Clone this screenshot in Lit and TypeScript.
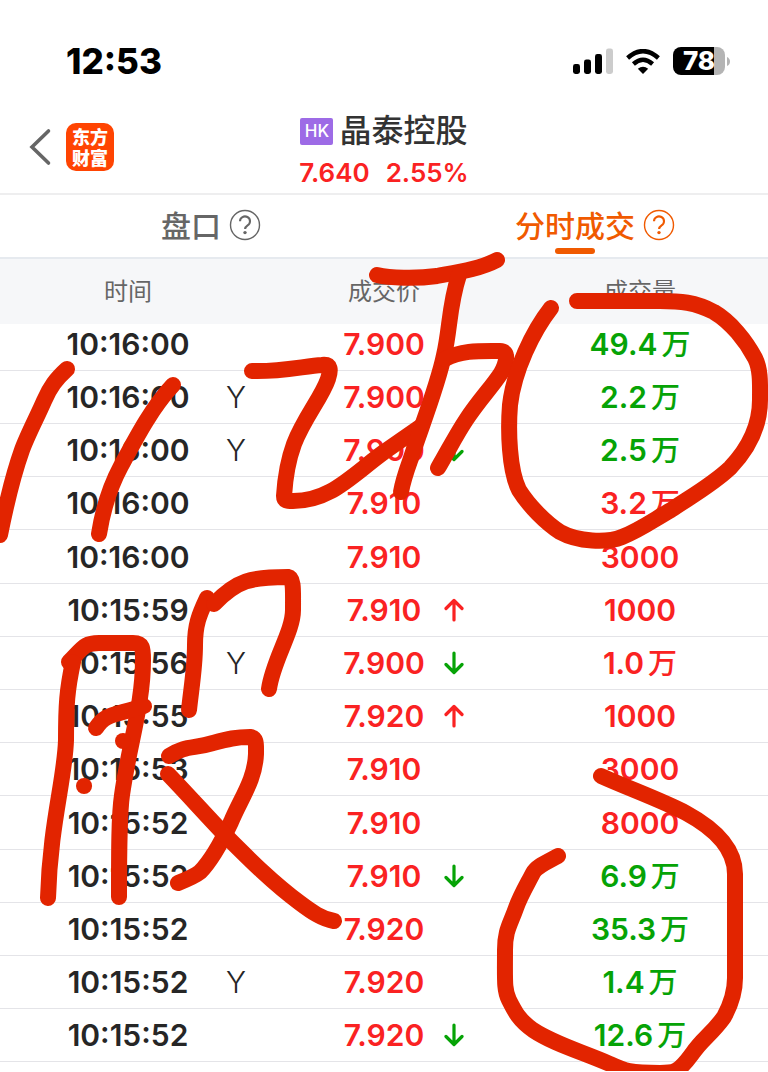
import { LitElement, html, css, svg, nothing } from "lit";
import { customElement } from "lit/decorators.js";
import { classMap } from "lit/directives/class-map.js";

type Tone = "up" | "down";
interface Trade {
  time: string;
  auction?: boolean;
  price: string;
  move?: Tone;
  volume: string;
  unit?: string;
  tone: Tone;
}

const TRADES: Trade[] = [
  { time: "10:16:00", price: "7.900", volume: "49.4", unit: "万", tone: "down" },
  { time: "10:16:00", auction: true, price: "7.900", volume: "2.2", unit: "万", tone: "down" },
  { time: "10:16:00", auction: true, price: "7.900", move: "down", volume: "2.5", unit: "万", tone: "down" },
  { time: "10:16:00", price: "7.910", volume: "3.2", unit: "万", tone: "up" },
  { time: "10:16:00", price: "7.910", volume: "3000", tone: "up" },
  { time: "10:15:59", price: "7.910", move: "up", volume: "1000", tone: "up" },
  { time: "10:15:56", auction: true, price: "7.900", move: "down", volume: "1.0", unit: "万", tone: "up" },
  { time: "10:15:55", price: "7.920", move: "up", volume: "1000", tone: "up" },
  { time: "10:15:53", price: "7.910", volume: "3000", tone: "up" },
  { time: "10:15:52", price: "7.910", volume: "8000", tone: "up" },
  { time: "10:15:52", price: "7.910", move: "down", volume: "6.9", unit: "万", tone: "down" },
  { time: "10:15:52", price: "7.920", volume: "35.3", unit: "万", tone: "down" },
  { time: "10:15:52", auction: true, price: "7.920", volume: "1.4", unit: "万", tone: "down" },
  { time: "10:15:52", price: "7.920", move: "down", volume: "12.6", unit: "万", tone: "down" },
];

/* Freehand marker strokes drawn over the list */
const STROKES = [
  "M67 369 C56 379 50 387 44 401 S27 436 22 450 S8 495 0 535",
  "M173 385 C152 407 135 440 121 466 S102 515 99 534",
  "M252 371 C280 372 305 366 322 365 C331 364 331 370 328 379 C322 397 304 418 294 444 C287 463 285 480 284 496 C284 501 287 501 293 501 C330 501 350 477 384 452 L420 427",
  "M377 275 C390 278 415 279 437 276 C459 272 480 269 497 260",
  "M459 275 C449 305 450 330 444 355 C438 385 420 430 411 458 C406 472 403 480 401 492",
  "M445 359 C462 350 480 351 500 351 C509 351 507 362 501 373 C492 387 479 400 466 420 C456 435 448 451 438 468",
  "M551 308 C533 331 514 370 510 405 C508 430 509 470 519 490 C529 506 546 523 560 532 C578 542 607 543 622 537 C640 530 655 519 671 510 C690 497 712 485 730 468 C750 447 760 425 760 400 C760 385 761 370 755 358 C746 341 731 322 714 312 C695 302 680 301 660 301 L577 301",
  "M207 598 C199 615 195 625 195 645 C195 668 191 690 189 710",
  "M214 604 C237 580 251 577 288 577 C294 578 293 590 293 610 C293 632 273 660 269 689",
  "M69 662 C83 648 84 643 99 643 L133 643 C143 643 143 648 143 660 C143 705 129 745 122 795 C119 815 119 850 119 897",
  "M73 662 C67 690 66 705 66 740 C65 778 50 825 48 898",
  "M96 728 C106 713 113 716 144 706",
  "M123 741 h0.1",
  "M84 786 h0.1",
  "M169 756 C186 745 193 749 213 743 C228 739 236 737 250 737 C257 738 256 744 256 754 C255 780 241 798 231 822 C222 841 211 861 200 872 C195 876 188 879 178 883",
  "M168 774 C190 797 206 815 227 837 C250 860 273 883 300 903 C312 912 322 919 334 921",
  "M601 776 C630 789 661 800 686 813 C710 826 735 845 735 874 L735 978 C735 992 730 1006 724 1017 C711 1035 703 1038 692 1054 C678 1073 674 1073 660 1073 C630 1073 625 1071 610 1064 C580 1051 554 1044 533 1030 C519 1020 515 1012 509 1000 C504 990 505 980 505 950 C505 930 510 925 516 908 C521 894 528 883 533 873 C536 867 543 864 558 856",
];

const help = svg`<circle cx="16" cy="16" r="14.5" fill="none" stroke="currentColor" stroke-width="1.4"/>
  <path d="M11 12.2 a5 4.8 0 1 1 7.6 4.1 c-1.8 1.2 -2.5 1.8 -2.5 3.7" fill="none" stroke="currentColor" stroke-width="2.1"/>
  <circle cx="16" cy="23.6" r="1.7" fill="currentColor"/>`;

@customElement("app-root")
export class AppRoot extends LitElement {
  static styles = css`
    :host {
      display: block;
      position: relative;
      overflow: hidden;
      min-height: 100vh;
      background: #fff;
      color: #262626;
      font-family: Inter, "Noto Sans CJK SC", sans-serif;
    }
    .status {
      display: flex;
      align-items: center;
      justify-content: space-between;
      height: 44px;
      padding: 39px 38px 17px 66px;
      color: #000;
    }
    .clock { font-size: 35px; line-height: 44px; font-weight: 800; }
    .indicators { display: flex; align-items: center; gap: 13px; }
    .indicators svg { display: block; }
    .battery { display: flex; align-items: center; gap: 2px; }
    .cell {
      width: 52px;
      height: 28px;
      border-radius: 8px;
      background: linear-gradient(90deg, #000 78%, #b4b4b4 78%);
      color: #fff;
      font-size: 26px;
      line-height: 28px;
      font-weight: 800;
      text-align: center;
    }
    .header {
      display: grid;
      grid-template-columns: 1fr auto 1fr;
      height: 93px;
      padding: 0 28px;
      border-bottom: 2px solid #eeeeef;
    }
    .nav { display: flex; align-items: center; gap: 14px; }
    button {
      border: 0;
      padding: 0;
      background: none;
      color: inherit;
      font: inherit;
      cursor: pointer;
    }
    .back svg, .move { display: block; }
    .logo {
      width: 48px;
      height: 48px;
      box-sizing: border-box;
      padding-top: 3px;
      border-radius: 10px;
      background: #ff4402;
      color: #fff;
      font: 900 18px/21px "Noto Sans CJK SC", sans-serif;
      text-align: center;
    }
    .stock { display: flex; flex-direction: column; align-items: center; padding-top: 10px; }
    .name { display: flex; align-items: center; gap: 6px; margin: 0; font-size: 32px; line-height: 42px; font-weight: 500; color: #333; }
    .market { width: 33px; border-radius: 2px; background: #9d6be6; color: #fff; font-size: 17px; line-height: 27px; text-align: center; }
    .quote { display: flex; gap: 16px; font-size: 26px; line-height: 42px; font-weight: 600; color: #fa2222; }
    .tabs { display: grid; grid-template-columns: 1fr 1fr; height: 62px; border-bottom: 2px solid #e6eaef; }
    .tab { display: flex; align-items: center; justify-content: center; gap: 8px; padding: 0 0 2px 38px; color: #666; font-size: 30px; line-height: 40px; font-weight: 500; }
    .tab.active { color: #f05a00; }
    .label { position: relative; padding-top: 2px; }
    .active .label::after {
      content: "";
      position: absolute;
      left: 40px;
      right: 40px;
      bottom: -8px;
      height: 6px;
      border-radius: 3px;
      background: #f05a00;
    }
    table { width: 100%; table-layout: fixed; border-collapse: separate; border-spacing: 0; }
    th { height: 65px; padding: 0; background: #f6f7f9; color: #666; font-size: 24px; line-height: 32px; font-weight: 400; }
    td { box-sizing: border-box; height: 53px; padding: 0; border-bottom: 1px solid #e4e4e8; font-size: 30px; line-height: 40px; font-weight: 600; text-align: center; }
    tr:nth-child(5n) td { height: 54px; }
    tr:first-child td { height: 47px; padding-bottom: 6px; }
    .slot { display: grid; grid-template-columns: 1fr auto 1fr; align-items: center; }
    .main { grid-column: 2; }
    .flag { justify-self: end; padding-right: 10px; font-weight: 300; }
    .move { justify-self: end; margin-right: 48px; }
    .unit { padding-left: 4px; font-size: 29px; line-height: 32px; font-weight: 500; }
    .up { color: #fa2222; }
    .down { color: #06a306; }
    .ink { position: absolute; top: 0; left: 0; width: 100%; pointer-events: none; }
  `;

  private row(t: Trade) {
    return html`<tr>
      <td>
        <div class="slot"><span class="main">${t.time}</span>${t.auction ? html`<span class="flag">Y</span>` : nothing}</div>
      </td>
      <td>
        <div class="slot">
          <span class="main up">${t.price}</span>${t.move
            ? html`<svg class=${classMap({ move: true, [t.move]: true })} width="20" height="24" viewBox="0 0 20 24" fill="none" stroke="currentColor" stroke-width="3.2" stroke-linecap="round" stroke-linejoin="round" aria-hidden="true">
                <path d=${t.move === "up" ? "M10 22 V3 M2 10.5 L10 2.5 L18 10.5" : "M10 2 V21 M2 13.5 L10 21.5 L18 13.5"} />
              </svg>`
            : nothing}
        </div>
      </td>
      <td class=${t.tone}>${t.volume}${t.unit ? html`<span class="unit">${t.unit}</span>` : nothing}</td>
    </tr>`;
  }

  render() {
    return html`
      <div class="status">
        <span class="clock">12:53</span>
        <div class="indicators">
          <svg width="40" height="26" viewBox="0 0 40 26" aria-hidden="true">
            <rect x="0" y="16" width="7" height="10" rx="2.4" />
            <rect x="11" y="11.5" width="7" height="14.5" rx="2.4" />
            <rect x="22" y="6" width="7" height="20" rx="2.4" />
            <rect x="33" y="0.5" width="7" height="25.5" rx="2.4" fill="#ccc" />
          </svg>
          <svg width="34" height="25" viewBox="0 0 34 25" aria-hidden="true">
            <path d="M17 25 L11.8 19.8 Q17 15.6 22.2 19.8 Z" />
            <path d="M7.4 15 Q17 6.4 26.6 15" fill="none" stroke="#000" stroke-width="4.4" />
            <path d="M1.6 9 Q17 -4.8 32.4 9" fill="none" stroke="#000" stroke-width="4.4" />
          </svg>
          <div class="battery">
            <div class="cell">78</div>
            <svg width="3" height="9" viewBox="0 0 3 9" aria-hidden="true"><path d="M0 0 Q3 1.5 3 4.5 T0 9 Z" fill="#b4b4b4" /></svg>
          </div>
        </div>
      </div>
      <header class="header">
        <div class="nav">
          <button class="back" aria-label="返回">
            <svg width="24" height="38" viewBox="0 0 24 38" fill="none" stroke="#666" stroke-width="3.6" stroke-linecap="round" stroke-linejoin="miter"><path d="M20.5 3 L4 19 L20.5 35" /></svg>
          </button>
          <div class="logo">东方<br />财富</div>
        </div>
        <div class="stock">
          <h1 class="name"><span class="market">HK</span>晶泰控股</h1>
          <div class="quote"><span>7.640</span><span>2.55%</span></div>
        </div>
      </header>
      <nav class="tabs">
        <button class="tab"><span class="label">盘口</span><svg width="32" height="32" viewBox="0 0 32 32" aria-hidden="true">${help}</svg></button>
        <button class="tab active"><span class="label">分时成交</span><svg width="32" height="32" viewBox="0 0 32 32" aria-hidden="true">${help}</svg></button>
      </nav>
      <table>
        <thead>
          <tr><th>时间</th><th>成交价</th><th>成交量</th></tr>
        </thead>
        <tbody>${TRADES.map((t) => this.row(t))}</tbody>
      </table>
      <svg class="ink" viewBox="0 0 768 1071" fill="none" stroke="#e22400" stroke-width="16" stroke-linecap="round" stroke-linejoin="round" aria-hidden="true">
        ${STROKES.map((d) => svg`<path d=${d} />`)}
      </svg>
    `;
  }
}
